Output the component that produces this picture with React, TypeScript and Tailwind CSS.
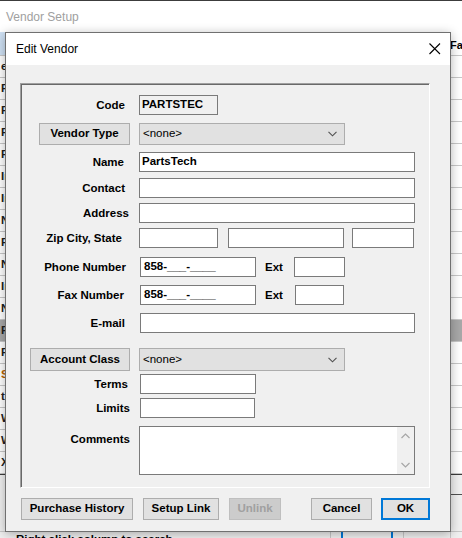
import React from 'react';

const rows = ['e', 'Fleet', 'Fleet', 'Fleet', 'Fleet', 'Imp', 'Imp', 'Nap', 'Fleet', 'Nap', 'Imp', 'Nap', 'Fleet', 'Fleet', 'Sup', 'tire', 'Wor', 'Wor', 'Xpr'];

function Chevron() {
  return (
    <svg width="9" height="6" viewBox="0 0 9 6" className="shrink-0">
      <path d="M0.5 0.8 L4.5 4.8 L8.5 0.8" fill="none" stroke="#505050" strokeWidth="1.1" />
    </svg>
  );
}

function Box({ className = '', ro = false, children }: { className?: string; ro?: boolean; children?: React.ReactNode }) {
  return (
    <div className={`h-[20px] shrink-0 border border-[#7a7a7a] flex items-center pl-[2px] font-bold ${ro ? 'bg-[#f0f0f0]' : 'bg-white'} ${className}`}>
      {children}
    </div>
  );
}

function Select({ className = '' }: { className?: string }) {
  return (
    <div className={`w-[206px] shrink-0 border border-[#adadad] bg-[#e1e1e1] flex items-center justify-between pl-[3px] pr-[7px] ${className}`}>
      <span>&lt;none&gt;</span>
      <Chevron />
    </div>
  );
}

function Btn({ className = '', children }: { className?: string; children: React.ReactNode }) {
  return (
    <div className={`h-[22px] shrink-0 border border-[#adadad] bg-[#e1e1e1] flex items-center justify-center font-bold ${className}`}>
      {children}
    </div>
  );
}

export default function App() {
  return (
    <div className="relative w-[462px] h-[538px] overflow-hidden bg-[#f0f0f0] text-[11.5px] text-black font-['Liberation_Sans',Arial,sans-serif]">
      {/* background window */}
      <div className="h-[32px] bg-white border-t border-[#3c3c3c] flex items-center pl-[6px] text-[#a0a0a0] text-[12px]">
        Vendor Setup
      </div>
      <div className="bg-white">
        <div className="h-[24px] flex border-b border-[#c8c8c8]">
          <div className="w-[20px] bg-[#cfe1f4]" />
          <div className="flex-1" />
          <div className="w-[12px] pt-[5px] text-[11px] font-bold">Fax</div>
        </div>
        {rows.map((r, i) => (
          <div
            key={i}
            className={`h-[22px] flex items-center border-b border-[#c8c8c8] pl-[1px] font-bold ${i === 12 ? 'bg-[#a8a8a8]' : 'bg-white'} ${i === 14 ? 'text-[#b86200]' : 'text-[#202020]'}`}
          >
            {r}
          </div>
        ))}
      </div>
      <div className="h-[57px] border-t border-[#3c3c3c] flex justify-end">
        <div className="w-[12px] mt-[19px] border-t border-[#505050]" />
      </div>
      <div className="h-[10px] flex items-start border-t border-[#c8c8c8]">
        <div className="pl-[16px] font-bold leading-[14px]">Right click column to search</div>
        <div className="flex-1" />
        <div className="w-[11px] h-full border-l border-[#c8c8c8]" />
        <div className="w-[52px] h-full border-x-2 border-[#0078d7]" />
        <div className="w-[10px] h-full" />
        <div className="w-[47px] h-full border-l border-[#c8c8c8]" />
        <div className="w-[12px] h-full border-l border-[#c8c8c8]" />
      </div>

      {/* dialog */}
      <div className="absolute left-[5px] top-[32px] w-[446px] h-[500px] border border-[#707070] bg-[#f0f0f0] shadow-[0_2px_10px_rgba(0,0,0,0.3)]">
        <div className="h-[32px] bg-white flex items-center justify-between pl-[10px] pr-[9px]">
          <span className="text-[12px]">Edit Vendor</span>
          <svg width="12" height="12" viewBox="0 0 12 12">
            <path d="M0.5 0.5 L11 11 M11 0.5 L0.5 11" stroke="#000" strokeWidth="1.1" />
          </svg>
        </div>
        <div className="h-[466px] pl-[14px] pt-[18px]">
          <div className="w-[410px] h-[405px] border border-t-[#a0a0a0] border-l-[#a0a0a0] border-r-white border-b-white shadow-[inset_1px_1px_0_#696969] flex flex-col">
            {/* Code */}
            <div className="mt-[11px] flex items-center">
              <div className="w-[109px] text-right pr-[5px] pt-[2px] font-bold">Code</div>
              <Box ro className="ml-[9px] w-[79px]">PARTSTEC</Box>
            </div>
            {/* Vendor type */}
            <div className="mt-[8px] flex h-[22px] pl-[18px]">
              <Btn className="w-[91px]">Vendor Type</Btn>
              <Select className="ml-[9px]" />
            </div>
            <div className="mt-[7px] flex items-center">
              <div className="w-[109px] text-right pr-[6px] pt-[2px] font-bold">Name</div>
              <Box className="ml-[9px] w-[276px]">PartsTech</Box>
            </div>
            <div className="mt-[6px] flex items-center">
              <div className="w-[109px] text-right pr-[5px] pt-[2px] font-bold">Contact</div>
              <Box className="ml-[9px] w-[276px]" />
            </div>
            <div className="mt-[5px] flex items-center">
              <div className="w-[109px] text-right pr-[1px] pt-[2px] font-bold">Address</div>
              <Box className="ml-[9px] w-[276px]" />
            </div>
            <div className="mt-[5px] flex items-center">
              <div className="w-[109px] text-right pr-[8px] pt-[2px] font-bold">Zip City, State</div>
              <Box className="ml-[9px] w-[79px]" />
              <Box className="ml-[10px] w-[116px]" />
              <Box className="ml-[8px] w-[62px]" />
            </div>
            <div className="mt-[9px] flex items-center">
              <div className="w-[109px] text-right pr-[4px] pt-[2px] font-bold">Phone Number</div>
              <Box className="ml-[10px] w-[116px] pl-[3px]">858-___-____</Box>
              <div className="ml-[9px] w-[29px] pt-[2px] font-bold">Ext</div>
              <Box className="w-[51px]" />
            </div>
            <div className="mt-[8px] flex items-center">
              <div className="w-[109px] text-right pr-[6px] pt-[2px] font-bold">Fax Number</div>
              <Box className="ml-[10px] w-[116px] pl-[3px]">858-___-____</Box>
              <div className="ml-[9px] w-[30px] pt-[2px] font-bold">Ext</div>
              <Box className="w-[49px]" />
            </div>
            <div className="mt-[8px] flex items-center">
              <div className="w-[109px] text-right pr-[5px] pt-[2px] font-bold">E-mail</div>
              <Box className="ml-[10px] w-[275px]" />
            </div>
            {/* Account class */}
            <div className="mt-[15px] flex h-[23px] pl-[9px]">
              <Btn className="w-[100px] h-[23px]">Account Class</Btn>
              <Select className="ml-[9px]" />
            </div>
            <div className="mt-[3px] flex items-center">
              <div className="w-[109px] text-right pr-[2px] pt-[2px] font-bold">Terms</div>
              <Box className="ml-[10px] w-[116px]" />
            </div>
            <div className="mt-[4px] flex items-center">
              <div className="w-[109px] text-right pt-[2px] font-bold">Limits</div>
              <Box className="ml-[10px] w-[115px]" />
            </div>
            <div className="mt-[8px] flex items-start">
              <div className="w-[109px] text-right font-bold pt-[5px]">Comments</div>
              <div className="ml-[9px] w-[276px] h-[49px] border border-[#7a7a7a] bg-white flex justify-end">
                <div className="w-[17px] bg-[#f0f0f0] flex flex-col items-center justify-between py-[6px]">
                  <svg width="9" height="6" viewBox="0 0 9 6">
                    <path d="M0.5 5 L4.5 1 L8.5 5" fill="none" stroke="#a6a6a6" strokeWidth="1.2" />
                  </svg>
                  <svg width="9" height="6" viewBox="0 0 9 6">
                    <path d="M0.5 1 L4.5 5 L8.5 1" fill="none" stroke="#a6a6a6" strokeWidth="1.2" />
                  </svg>
                </div>
              </div>
            </div>
          </div>
          {/* buttons */}
          <div className="mt-[10px] flex pl-[1px]">
            <Btn className="w-[112px]">Purchase History</Btn>
            <Btn className="ml-[10px] w-[76px]">Setup Link</Btn>
            <div className="ml-[10px] w-[52px] h-[22px] border border-[#bfbfbf] bg-[#cccccc] flex items-center justify-center font-bold text-[#a0a0a0]">
              Unlink
            </div>
            <Btn className="ml-[30px] w-[61px]">Cancel</Btn>
            <div className="ml-[9px] w-[49px] h-[22px] border-2 border-[#0078d7] bg-[#e1e1e1] flex items-center justify-center font-bold">
              OK
            </div>
          </div>
        </div>
      </div>
    </div>
  );
}
